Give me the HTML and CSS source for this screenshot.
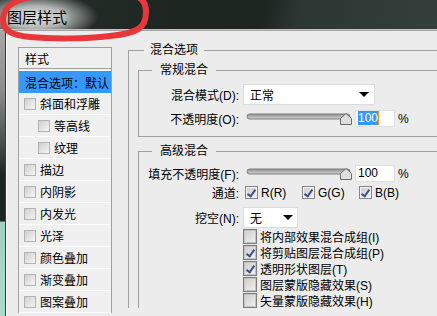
FILE: index.html
```html
<!DOCTYPE html>
<html lang="zh-CN">
<head>
    <meta charset="UTF-8">
    <title>图层样式</title>
    <link rel="stylesheet" href="styles.css">
</head>
<body>
    <div class="titlebar"><span class="title">图层样式</span></div>

    <!-- red marker drawn over the title -->
    <svg class="mark" width="160" height="46" viewBox="0 0 160 46">
        <path d="M3,20 C3,4 20,-4 50,-4 L120,-6 C140,-6 146,0 146,12 C146,28 138,33 110,36 C85,39 50,39 30,37 C10,35 3,30 3,20 Z"
              fill="none" stroke="#e8373a" stroke-width="6" stroke-linejoin="round"/>
    </svg>

    <div class="window">
        <ul class="styles">
            <li class="styles-head">样式</li>
            <li class="active">混合选项：默认</li>
            <li><span class="box"></span>斜面和浮雕</li>
            <li class="sub"><span class="box"></span>等高线</li>
            <li class="sub"><span class="box"></span>纹理</li>
            <li><span class="box"></span>描边</li>
            <li><span class="box"></span>内阴影</li>
            <li><span class="box"></span>内发光</li>
            <li><span class="box"></span>光泽</li>
            <li><span class="box"></span>颜色叠加</li>
            <li><span class="box"></span>渐变叠加</li>
            <li><span class="box"></span>图案叠加</li>
        </ul>

        <fieldset class="outer">
            <legend>混合选项</legend>

            <fieldset class="group">
                <legend>常规混合</legend>
                <div class="row tall">
                    <span class="lbl">混合模式(D):</span>
                    <div class="select wide">正常<span class="arrow"></span></div>
                </div>
                <div class="row slider-row">
                    <span class="lbl">不透明度(O):</span>
                    <svg class="slider" width="110" height="17" viewBox="0 0 110 17">
                        <defs>
                            <linearGradient id="track" x1="0" y1="0" x2="0" y2="1">
                                <stop offset="0" stop-color="#8e8e8e"/>
                                <stop offset="1" stop-color="#d4d4d4"/>
                            </linearGradient>
                        </defs>
                        <rect x="2" y="4" width="103" height="5" rx="2.5" fill="url(#track)" stroke="#7c7c7c"/>
                        <polygon points="95.5,8.5 101,3.5 106.5,8.5 106.5,14.5 95.5,14.5" fill="#dedede" stroke="#6c6c6c"/>
                    </svg>
                    <div class="num"><span class="sel">100</span></div>
                    <span class="pct">%</span>
                </div>
            </fieldset>

            <fieldset class="group second">
                <legend>高级混合</legend>
                <div class="row slider-row">
                    <span class="lbl">填充不透明度(F):</span>
                    <svg class="slider" width="110" height="17" viewBox="0 0 110 17">
                        <rect x="2" y="4" width="103" height="5" rx="2.5" fill="url(#track)" stroke="#7c7c7c"/>
                        <polygon points="95.5,8.5 101,3.5 106.5,8.5 106.5,14.5 95.5,14.5" fill="#dedede" stroke="#6c6c6c"/>
                    </svg>
                    <div class="num">100</div>
                    <span class="pct">%</span>
                </div>
                <div class="row channels">
                    <span class="lbl">通道:</span>
                    <div class="chans">
                        <span class="ch"><span class="chk on"></span>R(R)</span>
                        <span class="ch"><span class="chk on"></span>G(G)</span>
                        <span class="ch"><span class="chk on"></span>B(B)</span>
                    </div>
                </div>
                <div class="row tall knock">
                    <span class="lbl">挖空(N):</span>
                    <div class="select small">无<span class="arrow"></span></div>
                </div>
                <div class="opts">
                    <div class="opt"><span class="cb"></span>将内部效果混合成组(I)</div>
                    <div class="opt"><span class="cb on"></span>将剪贴图层混合成组(P)</div>
                    <div class="opt"><span class="cb on"></span>透明形状图层(T)</div>
                    <div class="opt"><span class="cb"></span>图层蒙版隐藏效果(S)</div>
                    <div class="opt"><span class="cb"></span>矢量蒙版隐藏效果(H)</div>
                </div>
            </fieldset>
        </fieldset>
    </div>
</body>
</html>
```

FILE: styles.css
```css
html, body {
    margin: 0;
}
body {
    width: 437px;
    height: 316px;
    overflow: hidden;
    position: relative;
    font-family: "Liberation Sans", "Noto Sans CJK SC", sans-serif;
    font-size: 12px;
    color: #000;
    /* desktop strip left of the dialog */
    background: linear-gradient(to bottom, #b6b6b6 0, #8c8c8c 90px, #4e5250 140px, #1d2521 175px, #1b2420 221px, #9fd2c1 222px, #abdacb 316px);
}

/* title bar */
.titlebar {
    height: 20px;
    padding: 9px 0 0 7px;
    border-bottom: 1px solid #c4c4c4;
    background:
        radial-gradient(ellipse 62px 24px at 36px 17px, rgba(214,216,215,1) 0, rgba(190,194,192,.9) 45%, rgba(60,66,63,0) 100%),
        linear-gradient(100deg, #28302d 0, #1e2622 40%, #1d2521 60%, #2c3632 68%, #343e3b 100%);
}
.title {
    font-size: 15px;
    line-height: 17px;
    color: #000;
    text-shadow: 0 0 6px #e6e6e6;
}
.mark {
    position: absolute;
    left: 0;
    top: 0;
}

/* dialog body */
.window {
    margin-left: 5px;
    height: 274px;
    overflow: hidden;
    padding: 11px 0 0 12px;
    border-left: 1px solid #3a3a3a;
    border-top: 1px solid #a2a2a2;
    background: #ececec;
    box-shadow: inset 1px 0 #fafafa;
    display: flex;
    align-items: flex-start;
}

/* styles list */
.styles {
    list-style: none;
    margin: 5px 16px 0 0;
    padding: 0;
    width: 92px;
    flex-shrink: 0;
    border: 1px solid #a0a0a0;
    border-bottom: none;
    background: #f0f0f0;
}
.styles li {
    height: 21px;
    padding-left: 5px;
    border-bottom: 1px solid #fff;
    display: flex;
    align-items: center;
    white-space: nowrap;
}
.styles li.sub {
    padding-left: 19px;
}
.styles .styles-head {
    height: 20px;
    padding-left: 6px;
    border-bottom: 1px solid #a0a0a0;
    background: #efefef;
}
.styles .active {
    height: 22px;
    margin-top: 2px;
    padding-left: 6px;
    border-bottom: none;
    background: #3399ff;
    box-shadow: 0 -1px #fff;
}
.box {
    width: 10px;
    height: 10px;
    margin-right: 4px;
    border: 1px solid #b2b2b2;
    background: linear-gradient(135deg, #cfcfcf, #f6f6f6);
}

/* option groups */
fieldset {
    margin: 0;
    min-width: 0;
    border: 1px solid #a0a0a0;
    border-right: none;
}
legend {
    line-height: 16px;
}
.outer {
    flex: 1;
    padding: 4px 0 0 9px;
    border-bottom: none;
}
.outer > legend {
    margin-left: 6px;
    padding: 0 6px;
}
.group {
    padding: 6px 0 9px 0;
}
.group > legend {
    margin-left: 13px;
    padding: 0 8px;
}
.group.second {
    margin-top: 6px;
    padding-bottom: 0;
    border-bottom: none;
}

.row {
    display: flex;
    align-items: center;
    height: 17px;
    white-space: nowrap;
}
.row.tall {
    height: 21px;
}
.slider-row + .row, .row + .slider-row {
    margin-top: 5px;
}
.lbl {
    width: 100px;
    margin-right: 4px;
    text-align: right;
    flex-shrink: 0;
}

.select {
    height: 21px;
    box-sizing: border-box;
    padding: 0 5px 0 6px;
    border: 1px solid #dcdcdc;
    background: #fff;
    display: flex;
    align-items: center;
    justify-content: space-between;
}
.select.wide {
    width: 132px;
}
.select.small {
    width: 55px;
    padding-right: 4px;
}
.arrow {
    width: 0;
    height: 0;
    border-left: 5px solid transparent;
    border-right: 5px solid transparent;
    border-top: 5px solid #000;
}

.slider {
    margin-left: 2px;
    flex-shrink: 0;
}
.num {
    width: 40px;
    height: 17px;
    box-sizing: border-box;
    padding-left: 2px;
    border: 1px solid #e0e0e0;
    background: #fff;
    line-height: 15px;
}
.sel {
    display: inline-block;
    background: #3399ff;
    color: #fff;
    border-right: 1px solid #f08a1c;
    line-height: 14px;
}
.pct {
    margin-left: 3px;
}

/* channels */
.row.channels {
    height: 13px;
    margin-top: 4px;
}
.chans {
    display: flex;
    margin-left: 2px;
}
.ch {
    width: 57px;
    display: flex;
    align-items: center;
}
.chk, .cb {
    box-sizing: border-box;
    border: 1px solid #858585;
    box-shadow: inset 0 0 0 1px #f4f4f4;
    background: linear-gradient(135deg, #cbcbcb, #f2f2f2);
    position: relative;
    flex-shrink: 0;
}
.chk {
    width: 13px;
    height: 13px;
    margin-right: 3px;
}
.chk.on::after, .cb.on::after {
    content: "";
    position: absolute;
    left: 3px;
    top: 1px;
    width: 3px;
    height: 7px;
    border-right: 2px solid #3e508a;
    border-bottom: 2px solid #3e508a;
    transform: rotate(35deg);
}
.row.knock {
    margin-top: 8px;
}

/* blend checkboxes */
.opts {
    margin-left: 104px;
}
.opt {
    height: 16px;
    display: flex;
    align-items: center;
    white-space: nowrap;
}
.cb {
    width: 14px;
    height: 15px;
    margin-right: 3px;
    border-color: #7c7c7c;
    box-shadow: inset 0 0 0 1px #c4c4c4;
}
.cb.on::after {
    left: 4px;
    top: 2px;
}
```
